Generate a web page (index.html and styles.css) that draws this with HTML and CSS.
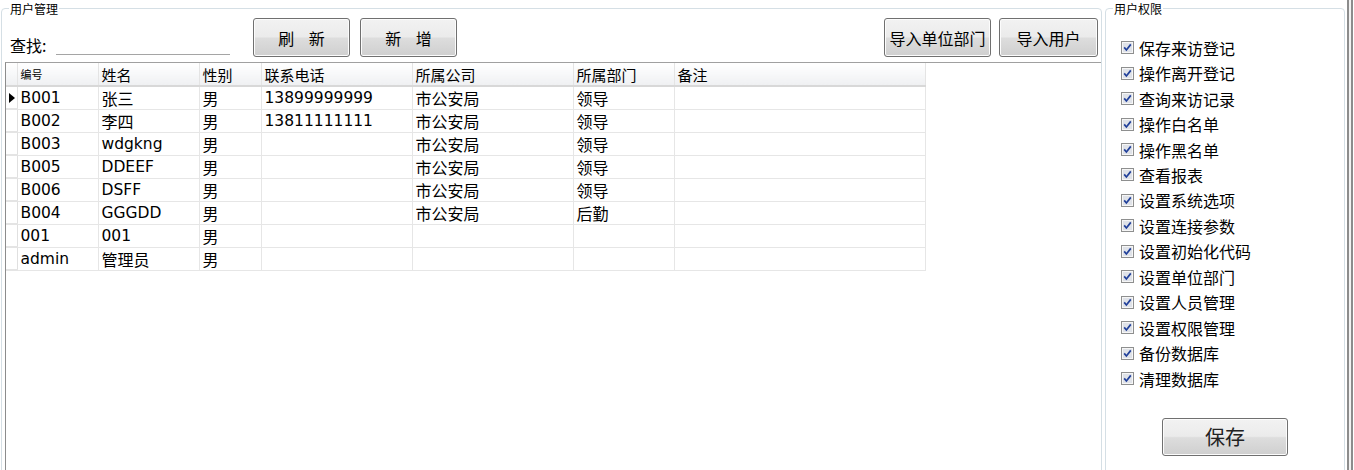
FILE: index.html
```html
<!DOCTYPE html>
<html lang="zh">
<head>
<meta charset="utf-8">
<title>用户管理</title>
<link rel="stylesheet" href="styles.css">
</head>
<body>
<div class="form">
  <fieldset class="group group-users">
    <legend>用户管理</legend>
    <div class="toolbar">
      <label class="search-label">查找:</label>
      <div class="search-input"></div>
      <button class="btn btn-small btn-first">刷 新</button>
      <button class="btn btn-small">新 增</button>
      <button class="btn btn-dept">导入单位部门</button>
      <button class="btn btn-user">导入用户</button>
    </div>
    <div class="grid">
      <table>
        <colgroup>
          <col class="c0"><col class="c1"><col class="c2"><col class="c3"><col class="c4"><col class="c5"><col class="c6"><col class="c7">
        </colgroup>
        <thead>
          <tr>
            <th class="rh"></th>
            <th class="small-head">编号</th>
            <th>姓名</th>
            <th>性别</th>
            <th>联系电话</th>
            <th>所属公司</th>
            <th>所属部门</th>
            <th>备注</th>
          </tr>
        </thead>
        <tbody>
          <tr><td class="rh"><svg class="arrow" width="6" height="10" viewBox="0 0 6 10"><polygon points="0,0 6,5 0,10" fill="#000"/></svg></td><td>B001</td><td class="zh">张三</td><td class="zh">男</td><td>13899999999</td><td class="zh">市公安局</td><td class="zh">领导</td><td></td></tr>
          <tr><td class="rh"></td><td>B002</td><td class="zh">李四</td><td class="zh">男</td><td>13811111111</td><td class="zh">市公安局</td><td class="zh">领导</td><td></td></tr>
          <tr><td class="rh"></td><td>B003</td><td>wdgkng</td><td class="zh">男</td><td></td><td class="zh">市公安局</td><td class="zh">领导</td><td></td></tr>
          <tr><td class="rh"></td><td>B005</td><td>DDEEF</td><td class="zh">男</td><td></td><td class="zh">市公安局</td><td class="zh">领导</td><td></td></tr>
          <tr><td class="rh"></td><td>B006</td><td>DSFF</td><td class="zh">男</td><td></td><td class="zh">市公安局</td><td class="zh">领导</td><td></td></tr>
          <tr><td class="rh"></td><td>B004</td><td>GGGDD</td><td class="zh">男</td><td></td><td class="zh">市公安局</td><td class="zh">后勤</td><td></td></tr>
          <tr><td class="rh"></td><td>001</td><td>001</td><td class="zh">男</td><td></td><td></td><td></td><td></td></tr>
          <tr><td class="rh"></td><td>admin</td><td class="zh">管理员</td><td class="zh">男</td><td></td><td></td><td></td><td></td></tr>
        </tbody>
      </table>
    </div>
  </fieldset>

  <fieldset class="group group-perms">
    <legend>用户权限</legend>
    <ul class="perm-list">
      <li><svg class="cb" width="13" height="13" viewBox="0 0 13 13"><rect x="0.5" y="0.5" width="12" height="12" fill="#f6f6f6" stroke="#8e8f8f"/><rect x="2" y="2" width="9" height="9" fill="#dfe2e8"/><path d="M3.2 6.4 L5.4 9 L9.8 3.4" stroke="#21409a" stroke-width="1.7" fill="none"/></svg><span>保存来访登记</span></li>
      <li><svg class="cb" width="13" height="13" viewBox="0 0 13 13"><rect x="0.5" y="0.5" width="12" height="12" fill="#f6f6f6" stroke="#8e8f8f"/><rect x="2" y="2" width="9" height="9" fill="#dfe2e8"/><path d="M3.2 6.4 L5.4 9 L9.8 3.4" stroke="#21409a" stroke-width="1.7" fill="none"/></svg><span>操作离开登记</span></li>
      <li><svg class="cb" width="13" height="13" viewBox="0 0 13 13"><rect x="0.5" y="0.5" width="12" height="12" fill="#f6f6f6" stroke="#8e8f8f"/><rect x="2" y="2" width="9" height="9" fill="#dfe2e8"/><path d="M3.2 6.4 L5.4 9 L9.8 3.4" stroke="#21409a" stroke-width="1.7" fill="none"/></svg><span>查询来访记录</span></li>
      <li><svg class="cb" width="13" height="13" viewBox="0 0 13 13"><rect x="0.5" y="0.5" width="12" height="12" fill="#f6f6f6" stroke="#8e8f8f"/><rect x="2" y="2" width="9" height="9" fill="#dfe2e8"/><path d="M3.2 6.4 L5.4 9 L9.8 3.4" stroke="#21409a" stroke-width="1.7" fill="none"/></svg><span>操作白名单</span></li>
      <li><svg class="cb" width="13" height="13" viewBox="0 0 13 13"><rect x="0.5" y="0.5" width="12" height="12" fill="#f6f6f6" stroke="#8e8f8f"/><rect x="2" y="2" width="9" height="9" fill="#dfe2e8"/><path d="M3.2 6.4 L5.4 9 L9.8 3.4" stroke="#21409a" stroke-width="1.7" fill="none"/></svg><span>操作黑名单</span></li>
      <li><svg class="cb" width="13" height="13" viewBox="0 0 13 13"><rect x="0.5" y="0.5" width="12" height="12" fill="#f6f6f6" stroke="#8e8f8f"/><rect x="2" y="2" width="9" height="9" fill="#dfe2e8"/><path d="M3.2 6.4 L5.4 9 L9.8 3.4" stroke="#21409a" stroke-width="1.7" fill="none"/></svg><span>查看报表</span></li>
      <li><svg class="cb" width="13" height="13" viewBox="0 0 13 13"><rect x="0.5" y="0.5" width="12" height="12" fill="#f6f6f6" stroke="#8e8f8f"/><rect x="2" y="2" width="9" height="9" fill="#dfe2e8"/><path d="M3.2 6.4 L5.4 9 L9.8 3.4" stroke="#21409a" stroke-width="1.7" fill="none"/></svg><span>设置系统选项</span></li>
      <li><svg class="cb" width="13" height="13" viewBox="0 0 13 13"><rect x="0.5" y="0.5" width="12" height="12" fill="#f6f6f6" stroke="#8e8f8f"/><rect x="2" y="2" width="9" height="9" fill="#dfe2e8"/><path d="M3.2 6.4 L5.4 9 L9.8 3.4" stroke="#21409a" stroke-width="1.7" fill="none"/></svg><span>设置连接参数</span></li>
      <li><svg class="cb" width="13" height="13" viewBox="0 0 13 13"><rect x="0.5" y="0.5" width="12" height="12" fill="#f6f6f6" stroke="#8e8f8f"/><rect x="2" y="2" width="9" height="9" fill="#dfe2e8"/><path d="M3.2 6.4 L5.4 9 L9.8 3.4" stroke="#21409a" stroke-width="1.7" fill="none"/></svg><span>设置初始化代码</span></li>
      <li><svg class="cb" width="13" height="13" viewBox="0 0 13 13"><rect x="0.5" y="0.5" width="12" height="12" fill="#f6f6f6" stroke="#8e8f8f"/><rect x="2" y="2" width="9" height="9" fill="#dfe2e8"/><path d="M3.2 6.4 L5.4 9 L9.8 3.4" stroke="#21409a" stroke-width="1.7" fill="none"/></svg><span>设置单位部门</span></li>
      <li><svg class="cb" width="13" height="13" viewBox="0 0 13 13"><rect x="0.5" y="0.5" width="12" height="12" fill="#f6f6f6" stroke="#8e8f8f"/><rect x="2" y="2" width="9" height="9" fill="#dfe2e8"/><path d="M3.2 6.4 L5.4 9 L9.8 3.4" stroke="#21409a" stroke-width="1.7" fill="none"/></svg><span>设置人员管理</span></li>
      <li><svg class="cb" width="13" height="13" viewBox="0 0 13 13"><rect x="0.5" y="0.5" width="12" height="12" fill="#f6f6f6" stroke="#8e8f8f"/><rect x="2" y="2" width="9" height="9" fill="#dfe2e8"/><path d="M3.2 6.4 L5.4 9 L9.8 3.4" stroke="#21409a" stroke-width="1.7" fill="none"/></svg><span>设置权限管理</span></li>
      <li><svg class="cb" width="13" height="13" viewBox="0 0 13 13"><rect x="0.5" y="0.5" width="12" height="12" fill="#f6f6f6" stroke="#8e8f8f"/><rect x="2" y="2" width="9" height="9" fill="#dfe2e8"/><path d="M3.2 6.4 L5.4 9 L9.8 3.4" stroke="#21409a" stroke-width="1.7" fill="none"/></svg><span>备份数据库</span></li>
      <li><svg class="cb" width="13" height="13" viewBox="0 0 13 13"><rect x="0.5" y="0.5" width="12" height="12" fill="#f6f6f6" stroke="#8e8f8f"/><rect x="2" y="2" width="9" height="9" fill="#dfe2e8"/><path d="M3.2 6.4 L5.4 9 L9.8 3.4" stroke="#21409a" stroke-width="1.7" fill="none"/></svg><span>清理数据库</span></li>
    </ul>
    <button class="btn btn-save">保存</button>
  </fieldset>

  <div class="frame-edge"></div>
</div>
</body>
</html>
```

FILE: styles.css
```css
* { box-sizing: border-box; }

html, body {
  margin: 0;
  padding: 0;
  background: #ffffff;
}

body {
  width: 1354px;
  height: 470px;
  overflow: hidden;
  font-family: "DejaVu Sans", "Noto Sans CJK SC", sans-serif;
  color: #000;
}

.form {
  display: flex;
  height: 470px;
  padding-left: 1px;
  overflow: hidden;
}

.group {
  margin: 0;
  padding: 0;
  border: 1px solid #d5dfe5;
  border-radius: 4px;
  height: 520px;
  min-width: 0;
}

.group legend {
  font-family: "Noto Sans CJK SC", sans-serif;
  font-size: 12px;
  line-height: 14px;
  height: 16px;
  padding: 2px 1px 0 1px;
  margin-left: 7px;
  color: #000;
}

.group-users {
  width: 1101px;
  display: flex;
  flex-direction: column;
}

.group-perms {
  width: 240px;
  margin-left: 3px;
  display: flex;
  flex-direction: column;
}

/* toolbar */
.toolbar {
  display: flex;
  align-items: flex-start;
  height: 39px;
  margin-top: 2px;
  padding-left: 8px;
  padding-right: 3px;
}

.search-label {
  font-family: "Noto Sans CJK SC", sans-serif;
  font-size: 16px;
  line-height: 18px;
  margin-top: 18px;
  width: 46px;
}

.search-input {
  width: 174px;
  height: 37px;
  border-bottom: 1px solid #a5a5a5;
}

.btn {
  font-family: "Noto Sans CJK SC", sans-serif;
  font-size: 16px;
  line-height: 18px;
  color: #000;
  height: 39px;
  padding: 0;
  border: 1px solid #707070;
  border-radius: 3px;
  background: linear-gradient(to bottom, #f2f2f2 0%, #ebebeb 48%, #dddddd 52%, #cfcfcf 100%);
  box-shadow: inset 0 0 0 1px #fcfcfc;
}

.btn-small {
  width: 97px;
  word-spacing: 11px;
  margin-left: 10px;
}

.btn-first { margin-left: 23px; }

.btn-dept {
  width: 107px;
  margin-left: auto;
}

.btn-user {
  width: 99px;
  margin-left: 8px;
}

/* grid */
.grid {
  margin-top: 5px;
  margin-left: 3px;
  flex: 1;
  border-top: 1px solid #a0a0a0;
  border-left: 1px solid #8c8c8c;
  background: #ffffff;
}

.grid table {
  border-collapse: collapse;
  table-layout: fixed;
  width: 919px;
}

.c0 { width: 11px; }
.c1 { width: 81px; }
.c2 { width: 101px; }
.c3 { width: 62px; }
.c4 { width: 151px; }
.c5 { width: 161px; }
.c6 { width: 101px; }
.c7 { width: 251px; }

.grid th {
  height: 23px;
  padding: 0 0 0 3px;
  text-align: left;
  font-family: "Noto Sans CJK SC", sans-serif;
  font-weight: normal;
  font-size: 15px;
  line-height: 17px;
  background: linear-gradient(to bottom, #ffffff 0%, #f7f8f9 50%, #eff0f2 100%);
  border-right: 1px solid #e4e4e4;
  border-bottom: 2px solid #d8d8d8;
  white-space: nowrap;
  overflow: hidden;
}

.grid th.small-head {
  font-size: 11px;
  vertical-align: top;
  padding-top: 3px;
}

.grid td {
  height: 23px;
  padding: 0 0 0 3px;
  font-size: 15.5px;
  line-height: 18px;
  border-right: 1px solid #e6e6e6;
  border-bottom: 1px solid #e6e6e6;
  white-space: nowrap;
  overflow: hidden;
}

.grid td.zh {
  font-family: "Noto Sans CJK SC", sans-serif;
  font-size: 16px;
}

.grid td.rh {
  padding: 0 0 0 3px;
  background: #ffffff;
  border-bottom: 2px solid #e4e4e4;
  border-right: 1px solid #e0e0e0;
  vertical-align: middle;
}

.grid th.rh {
  padding: 0;
}

.arrow {
  display: block;
}

/* permission list */
.perm-list {
  list-style: none;
  margin: 19px 0 0 0;
  padding: 0 0 0 15px;
  display: flex;
  flex-direction: column;
}

.perm-list li {
  height: 25.46px;
  display: flex;
  align-items: center;
  gap: 5px;
  font-family: "Noto Sans CJK SC", sans-serif;
  font-size: 16px;
  line-height: 18px;
}

.cb {
  flex: none;
  display: block;
}

.btn-save {
  align-self: center;
  width: 126px;
  height: 38px;
  margin-top: 27px;
  font-size: 20px;
  color: #222;
}

.frame-edge {
  flex: none;
  width: 6px;
  height: 470px;
  margin-left: 2px;
  border-left: 2px solid #8c8c8c;
  border-right: 2px solid #8c8c8c;
  background: #f2f2f2;
}
```
